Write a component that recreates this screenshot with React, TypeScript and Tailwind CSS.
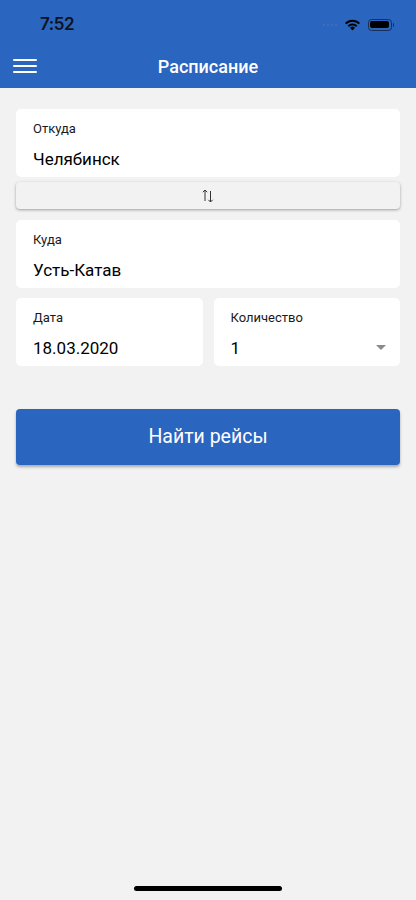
import React from "react";

export default function App() {
  return (
    <div className="w-[416px] h-[900px] bg-[#f2f2f2] flex flex-col relative overflow-hidden" style={{ fontFamily: "Roboto, 'Noto Sans', sans-serif" }}>
      <div className="bg-[#2a65bf] h-[88px] shrink-0 flex flex-col">
        <div className="h-[46px] flex items-center justify-between pl-[40px] pr-[22px] pt-[3px]">
          <span className="text-[17px] font-semibold text-[#0d1420] tracking-tight" style={{ fontFamily: "Inter, Roboto, sans-serif" }}>7:52</span>
          <div className="flex items-center gap-[5px]">
            <div className="flex gap-[2px] mr-[2px]">
              <span className="w-[2px] h-[2px] rounded-full bg-[#4a6fa8]" />
              <span className="w-[2px] h-[2px] rounded-full bg-[#4a6fa8]" />
              <span className="w-[2px] h-[2px] rounded-full bg-[#4a6fa8]" />
              <span className="w-[2px] h-[2px] rounded-full bg-[#4a6fa8]" />
            </div>
            <svg width="17" height="12" viewBox="0 0 17 12">
              <path d="M8.5 11.5 L6 8.8 A3.6 3.6 0 0 1 11 8.8 Z" fill="#000" />
              <path d="M3.6 6.5 A7 7 0 0 1 13.4 6.5 L12 7.9 A5 5 0 0 0 5 7.9 Z" fill="#000" />
              <path d="M1 3.9 A10.6 10.6 0 0 1 16 3.9 L14.6 5.3 A8.6 8.6 0 0 0 2.4 5.3 Z" fill="#000" />
            </svg>
            <div className="flex items-center ml-[2px]">
              <div className="w-[24px] h-[12px] rounded-[3.5px] border border-[#1b2f55] p-[1.5px]">
                <div className="w-full h-full rounded-[2px] bg-black" />
              </div>
              <div className="w-[1.5px] h-[4px] bg-[#1b2f55] rounded-r-sm ml-[1px]" />
            </div>
          </div>
        </div>
        <div className="flex-1 relative flex items-center justify-center">
          <div className="absolute left-[13px] top-[13px] flex flex-col gap-[4px]">
            <span className="block w-[24px] h-[2px] bg-white rounded" />
            <span className="block w-[24px] h-[2px] bg-white rounded" />
            <span className="block w-[24px] h-[2px] bg-white rounded" />
          </div>
          <span className="text-white text-[18px] font-medium -mt-[1px]">Расписание</span>
        </div>
      </div>

      <div className="px-[16px] pt-[21px] flex flex-col">
        <div className="bg-white rounded-[5px] h-[68px] pl-[17px] pt-[11px]">
          <div className="text-[13px] text-[#1a1a1a] leading-[18px]">Откуда</div>
          <div className="text-[17px] text-black leading-[24px] mt-[9px]">Челябинск</div>
        </div>
        <div className="mt-[5px] h-[27px] rounded-[4px] bg-[#f2f2f2] shadow-[0_1px_3px_rgba(0,0,0,0.35)] flex items-center justify-center">
          <svg width="12" height="16" viewBox="0 0 12 16" className="mt-[1px]">
            <path d="M3 13 V2 M0.8 4.2 L3 2 L5.2 4.2" stroke="#333" strokeWidth="1" fill="none" />
            <path d="M8.5 3 V14 M6.3 11.8 L8.5 14 L10.7 11.8" stroke="#333" strokeWidth="1" fill="none" />
          </svg>
        </div>
        <div className="mt-[11px] bg-white rounded-[5px] h-[68px] pl-[17px] pt-[11px]">
          <div className="text-[13px] text-[#1a1a1a] leading-[18px]">Куда</div>
          <div className="text-[17px] text-black leading-[24px] mt-[9px]">Усть-Катав</div>
        </div>
        <div className="mt-[10px] grid grid-cols-2 gap-[11px]">
          <div className="bg-white rounded-[5px] h-[68px] pl-[17px] pt-[11px]">
            <div className="text-[13px] text-[#1a1a1a] leading-[18px]">Дата</div>
            <div className="text-[17px] text-black leading-[24px] mt-[9px]">18.03.2020</div>
          </div>
          <div className="bg-white rounded-[5px] h-[68px] pl-[17px] pr-[14px] pt-[11px]">
            <div className="text-[13px] text-[#1a1a1a] leading-[18px]">Количество</div>
            <div className="flex items-center justify-between mt-[9px]">
              <span className="text-[17px] text-black leading-[24px]">1</span>
              <svg width="10" height="5" viewBox="0 0 10 5" className="-mt-[2px]">
                <path d="M0 0 H10 L5 5 Z" fill="#8a8a8a" />
              </svg>
            </div>
          </div>
        </div>
        <button className="mt-[43px] h-[56px] rounded-[4px] bg-[#2a65bf] shadow-[0_2px_3px_rgba(0,0,0,0.3)] text-white text-[19.5px] flex items-center justify-center">
          Найти рейсы
        </button>
      </div>

      <div className="absolute left-[134px] top-[886px] w-[148px] h-[5px] rounded-full bg-black" />
    </div>
  );
}
